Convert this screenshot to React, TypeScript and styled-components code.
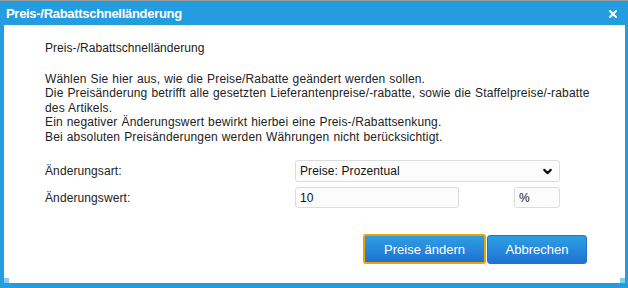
import styled, { createGlobalStyle } from "styled-components";
import { X, ChevronDown } from "lucide-react";

const GlobalStyle = createGlobalStyle`
  html, body {
    margin: 0;
    padding: 0;
    background: #ffffff;
  }
  * {
    box-sizing: border-box;
  }
`;

function App() {
  return (
    <>
      <GlobalStyle />
      <Window>
        <Titlebar>
          <Title>Preis-/Rabattschnelländerung</Title>
          <Close>
            <X size={12} strokeWidth={4} color="#ffffff" />
          </Close>
        </Titlebar>
        <Content>
          <Heading>Preis-/Rabattschnelländerung</Heading>
          <Text>
            Wählen Sie hier aus, wie die Preise/Rabatte geändert werden sollen.
            <br />
            Die Preisänderung betrifft alle gesetzten Lieferantenpreise/-rabatte,
            sowie die Staffelpreise/-rabatte des Artikels.
            <br />
            Ein negativer Änderungswert bewirkt hierbei eine Preis-/Rabattsenkung.
            <br />
            Bei absoluten Preisänderungen werden Währungen nicht berücksichtigt.
          </Text>
          <Form>
            <Label>Änderungsart:</Label>
            <SelectWrap>
              <Select defaultValue="prozent">
                <option value="prozent">Preise: Prozentual</option>
                <option value="absolut">Preise: Absolut</option>
              </Select>
              <Chevron>
                <ChevronDown size={13} strokeWidth={4} color="#111" />
              </Chevron>
            </SelectWrap>
            <Label>Änderungswert:</Label>
            <ValueRow>
              <Input width={164} defaultValue="10" />
              <Input width={46} defaultValue="%" readOnly />
            </ValueRow>
          </Form>
          <Buttons>
            <Button primary>Preise ändern</Button>
            <Button>Abbrechen</Button>
          </Buttons>
        </Content>
        <Handle side="left" />
        <Handle side="right" />
      </Window>
    </>
  );
}

export default App;

const Window = styled.div`
  position: relative;
  width: 628px;
  height: 288px;
  background-color: #239ce0;
  border-top: 1px solid #9c9c9c;
  padding: 0 3px 5px 4px;
  display: flex;
  flex-direction: column;
  font-family: "Liberation Sans", Arial, sans-serif;
`;

const Titlebar = styled.div`
  height: 24px;
  display: flex;
  align-items: center;
  justify-content: space-between;
  padding: 0 6px 0 2px;
`;

const Title = styled.span`
  color: #ffffff;
  font-size: 13px;
  font-weight: 700;
  letter-spacing: -0.3px;
`;

const Close = styled.span`
  display: flex;
  align-items: center;
  margin-top: 2px;
`;

const Content = styled.div`
  flex: 1;
  background-color: #ffffff;
  padding: 16px 14px 0 41px;
  display: flex;
  flex-direction: column;
  color: #222222;
  font-size: 12px;
`;

const Heading = styled.p`
  margin: 0;
  line-height: 14.5px;
  letter-spacing: 0.05px;
`;

const Text = styled.p`
  margin: 16px 0 0 0;
  max-width: 560px;
  line-height: 14.6px;
  letter-spacing: 0.15px;
  word-spacing: 0.5px;
`;

const Form = styled.div`
  margin-top: 16px;
  display: grid;
  grid-template-columns: 250px 265px;
  row-gap: 5px;
  align-items: center;
`;

const Label = styled.span`
  line-height: 14px;
  letter-spacing: 0.1px;
`;

const SelectWrap = styled.div`
  position: relative;
  height: 22px;
`;

const Select = styled.select`
  appearance: none;
  width: 100%;
  height: 22px;
  border: 1px solid #dcdcdc;
  border-radius: 3px;
  background-color: #fcfcfc;
  padding: 0 0 0 4px;
  font-family: "Liberation Sans", Arial, sans-serif;
  font-size: 12px;
  letter-spacing: 0.1px;
  color: #111111;
  outline: none;
`;

const Chevron = styled.span`
  position: absolute;
  right: 6px;
  top: 5px;
  display: flex;
  pointer-events: none;
`;

const ValueRow = styled.div`
  display: flex;
  justify-content: space-between;
`;

const Input = styled.input<{ width: number }>`
  width: ${(p) => p.width}px;
  height: 21px;
  border: 1px solid #dcdcdc;
  border-radius: 3px;
  background-color: #fcfcfc;
  padding: 0 4px;
  font-family: "Liberation Sans", Arial, sans-serif;
  font-size: 12px;
  color: #111111;
  outline: none;
`;

const Buttons = styled.div`
  margin-top: 27px;
  padding-right: 24px;
  display: flex;
  justify-content: flex-end;
  gap: 1px;
`;

const Button = styled.button<{ primary?: boolean }>`
  height: ${(p) => (p.primary ? "30px" : "29px")};
  margin-top: ${(p) => (p.primary ? "-1px" : "0")};
  padding: 0;
  width: ${(p) => (p.primary ? "123px" : "100px")};
  border: ${(p) => (p.primary ? "2px solid #f0a000" : "1px solid #1c75c8")};
  border-radius: 3px;
  background: linear-gradient(#2e9fe4, #1f72d2);
  color: #ffffff;
  font-family: "Liberation Sans", Arial, sans-serif;
  font-size: 13px;
  letter-spacing: 0px;
`;

const Handle = styled.span<{ side: "left" | "right" }>`
  position: absolute;
  bottom: 5px;
  ${(p) => (p.side === "left" ? "left: 4px;" : "right: 3px;")}
  width: 5px;
  height: 5px;
  background-color: #86cdf2;
`;
